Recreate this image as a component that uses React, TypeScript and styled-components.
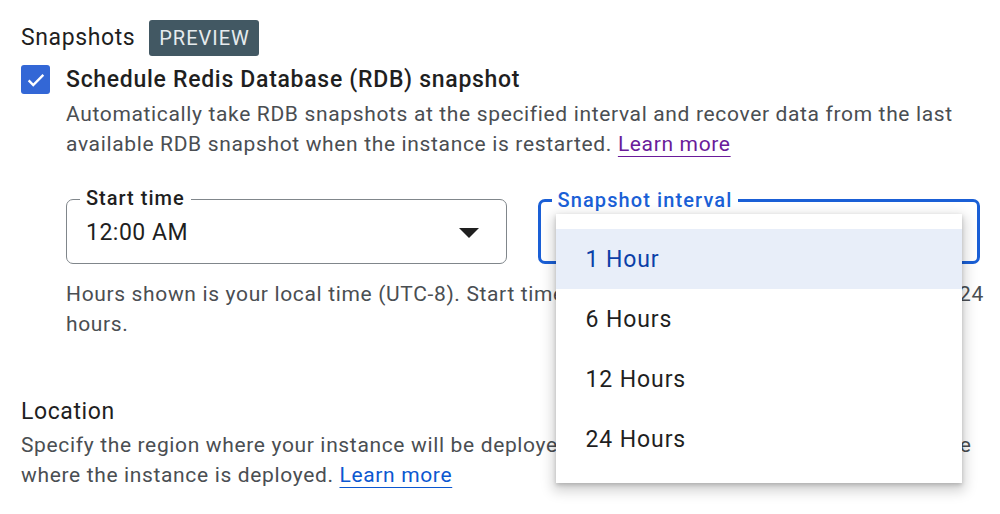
import React from "react"
import styled, { createGlobalStyle } from "styled-components"

const GlobalStyle = createGlobalStyle`
  html, body {
    margin: 0;
    padding: 0;
    background: #fff;
  }
  body {
    font-family: Roboto, "Noto Sans", sans-serif;
    color: #1f1f1f;
    -webkit-font-smoothing: antialiased;
  }
`

const Page = styled.div`
  width: 1000px;
  height: 514px;
  overflow: hidden;
  padding: 20px 0 0 21px;
  box-sizing: border-box;
`

const TitleRow = styled.div`
  display: flex;
  align-items: center;
  gap: 14px;
  height: 36px;
`

const SectionTitle = styled.div`
  font-size: 23px;
  line-height: 30px;
  letter-spacing: 0.6px;
  color: #1f1f1f;
`

const Badge = styled.span`
  display: inline-flex;
  align-items: center;
  height: 36px;
  padding: 0 9px 0 10px;
  border-radius: 3px;
  background: #425863;
  color: #e6ebee;
  font-size: 20px;
  letter-spacing: 1px;
`

const CheckRow = styled.div`
  display: flex;
  align-items: flex-start;
  gap: 16px;
  margin-top: 9px;
`

const Box = styled.div`
  flex: none;
  width: 29px;
  height: 29px;
  border-radius: 3px;
  background: #3367d6;
  display: flex;
  align-items: center;
  justify-content: center;
`

const CheckBody = styled.div`
  flex: 1;
`

const CheckLabel = styled.div`
  font-size: 23px;
  line-height: 30px;
  font-weight: 500;
  letter-spacing: 0.7px;
  color: #1f1f1f;
  margin-bottom: 4px;
`

const Description = styled.div`
  font-size: 21px;
  line-height: 30px;
  letter-spacing: 0.65px;
  color: #4a4e52;
  width: 916px;
`

const Link = styled.a<{ $visited?: boolean }>`
  color: ${p => (p.$visited ? "#6a1b9a" : "#0b57d0")};
  text-decoration: underline;
  text-underline-offset: 5px;
  text-decoration-thickness: 1px;
`

const Fields = styled.div`
  display: flex;
  gap: 31px;
  margin-top: 40px;
  margin-left: 45px;
  width: 914px;
`

const Field = styled.div<{ $focused?: boolean }>`
  position: relative;
  flex: 1;
  height: 65px;
  box-sizing: border-box;
  border: ${p => (p.$focused ? "3px solid #1a5fd6" : "1.5px solid #80868b")};
  border-radius: 7px;
  display: flex;
  align-items: center;
  padding: 0 ${p => (p.$focused ? "18px" : "19px")};
`

const FieldLabel = styled.span<{ $focused?: boolean }>`
  position: absolute;
  top: -16px;
  left: ${p => (p.$focused ? "11px" : "13px")};
  padding: 0 6px;
  background: #fff;
  font-size: 20px;
  line-height: 28px;
  font-weight: 500;
  letter-spacing: ${p => (p.$focused ? "1.1px" : "1px")};
  color: ${p => (p.$focused ? "#1a5fd6" : "#1f1f1f")};
`

const FieldValue = styled.span`
  flex: 1;
  font-size: 23px;
  letter-spacing: 0.5px;
  color: #1f1f1f;
  margin-top: 2px;
`

const Arrow = styled.span`
  width: 0;
  height: 0;
  border-left: 10px solid transparent;
  border-right: 10px solid transparent;
  border-top: 10px solid #1f1f1f;
  margin-right: 8px;
  margin-top: 2px;
`

const Hint = styled(Description)`
  margin-top: 15px;
  margin-left: 45px;
  width: 922px;
`

const Location = styled.div`
  margin-top: 58px;
`

const LocationText = styled(Description)`
  width: 962px;
  margin-top: 3px;
`

const Menu = styled.ul`
  position: absolute;
  top: 12px;
  left: 15px;
  width: 406px;
  margin: 0;
  padding: 15px 0 14px;
  list-style: none;
  background: #fff;
  box-shadow: 0 5px 12px 3px rgba(0, 0, 0, 0.18), 0 2px 4px rgba(0, 0, 0, 0.18);
  z-index: 2;
`

const MenuItem = styled.li<{ $selected?: boolean }>`
  height: 60px;
  display: flex;
  align-items: center;
  padding-left: 30px;
  font-size: 23px;
  letter-spacing: 0.9px;
  background: ${p => (p.$selected ? "#e8eef9" : "transparent")};
  color: ${p => (p.$selected ? "#0b3fa8" : "#1f1f1f")};
`

const intervals = ["1 Hour", "6 Hours", "12 Hours", "24 Hours"]

const CheckIcon = () => (
  <svg width="22" height="22" viewBox="0 0 24 24">
    <path d="M4 12.5l5 5L20 6.5" fill="none" stroke="#fff" strokeWidth="2.6" />
  </svg>
)

const App = () => (
  <Page>
    <GlobalStyle />
    <TitleRow>
      <SectionTitle>Snapshots</SectionTitle>
      <Badge>PREVIEW</Badge>
    </TitleRow>
    <CheckRow>
      <Box>
        <CheckIcon />
      </Box>
      <CheckBody>
        <CheckLabel>Schedule Redis Database (RDB) snapshot</CheckLabel>
        <Description>
          Automatically take RDB snapshots at the specified interval and recover data from the last
          available RDB snapshot when the instance is restarted. <Link $visited>Learn more</Link>
        </Description>
      </CheckBody>
    </CheckRow>
    <Fields>
      <Field>
        <FieldLabel>Start time</FieldLabel>
        <FieldValue>12:00 AM</FieldValue>
        <Arrow />
      </Field>
      <Field $focused>
        <FieldLabel $focused>Snapshot interval</FieldLabel>
        <Menu>
          {intervals.map((label, i) => (
            <MenuItem key={label} $selected={i === 0}>
              {label}
            </MenuItem>
          ))}
        </Menu>
      </Field>
    </Fields>
    <Hint>
      Hours shown is your local time (UTC-8). Start times must be scheduled within the coming 24
      hours.
    </Hint>
    <Location>
      <SectionTitle>Location</SectionTitle>
      <LocationText>
        Specify the region where your instance will be deployed. Data will be persisted in the same zone
        where the instance is deployed. <Link>Learn more</Link>
      </LocationText>
    </Location>
  </Page>
)

export default App
